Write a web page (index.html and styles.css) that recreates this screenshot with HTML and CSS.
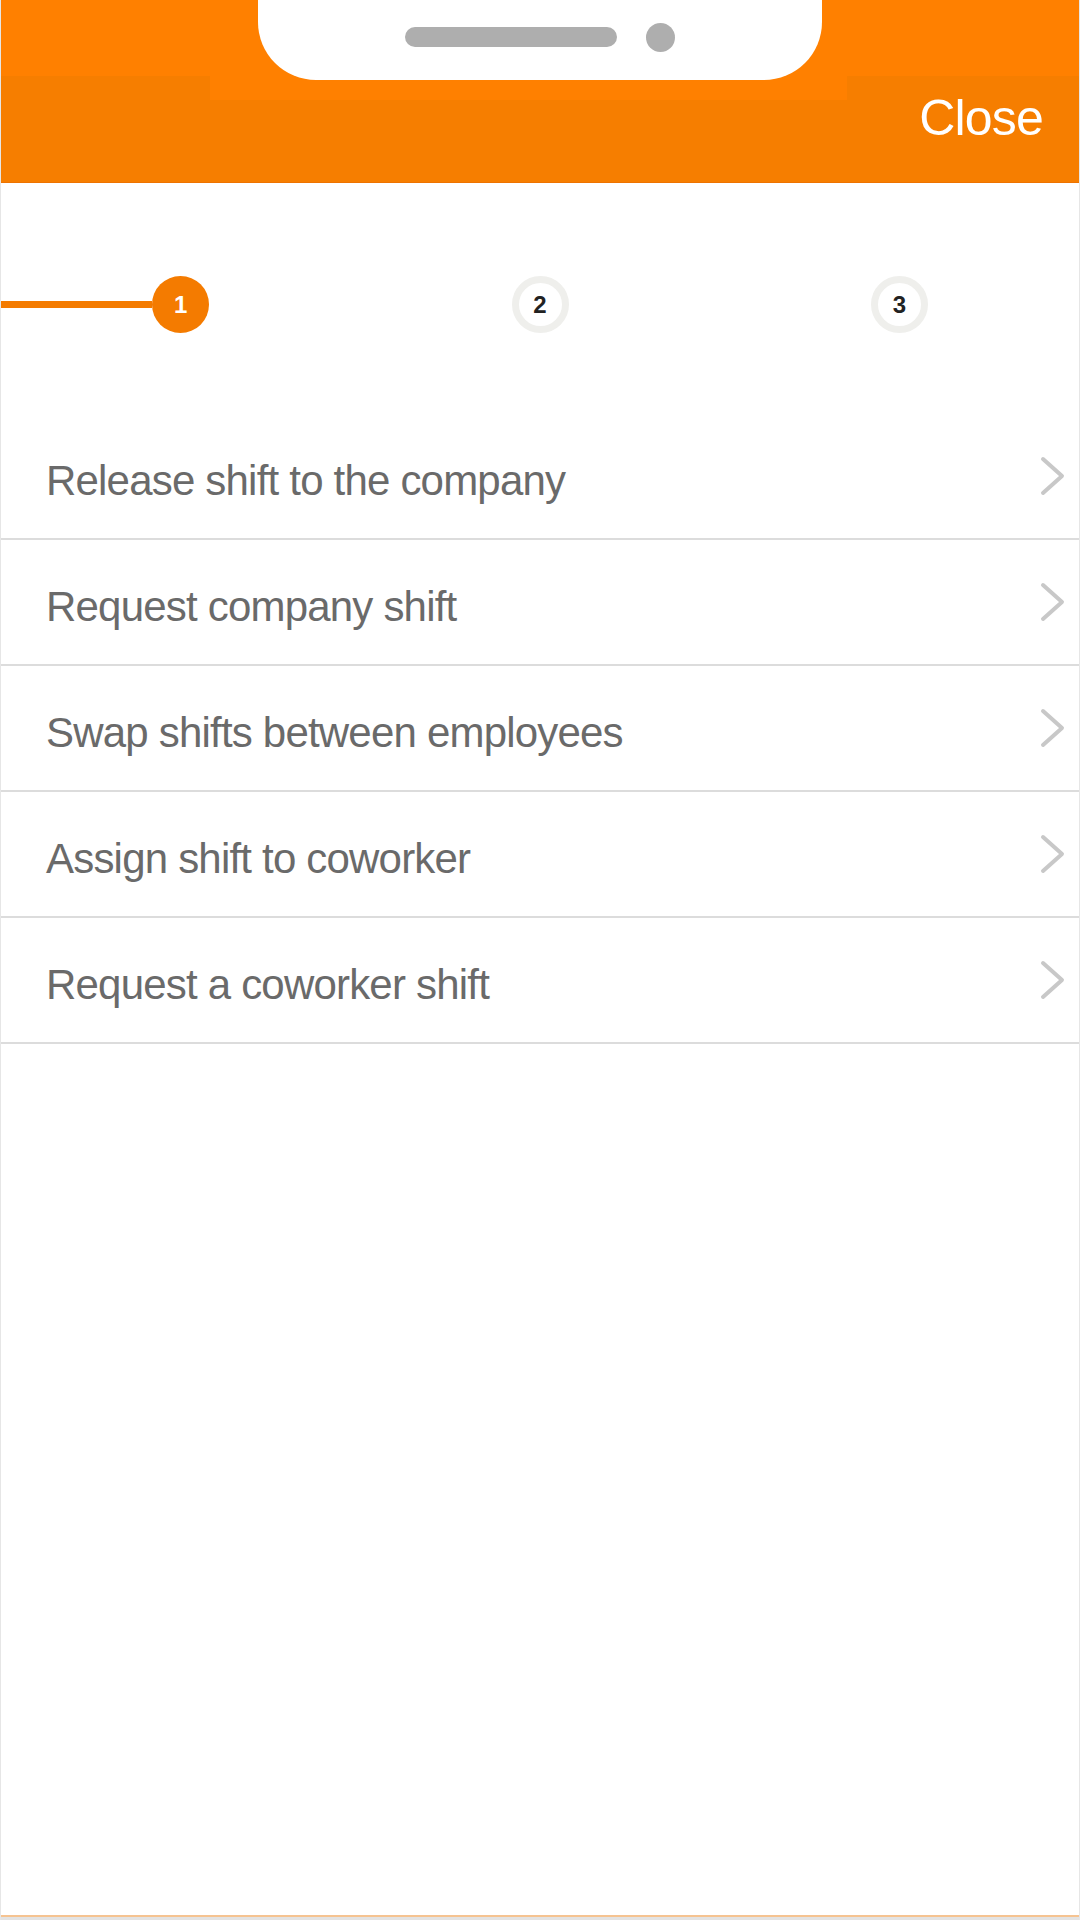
FILE: index.html
```html
<!DOCTYPE html>
<html lang="en">
<head>
<meta charset="utf-8">
<title>Shift options</title>
<link rel="stylesheet" href="styles.css">
</head>
<body>
<div class="screen">
  <header class="header">
    <div class="status">
      <div class="notch">
        <span class="speaker"></span>
        <span class="camera"></span>
      </div>
    </div>
    <div class="nav">
      <span class="close">Close</span>
    </div>
  </header>

  <div class="stepper">
    <div class="step">
      <span class="track"></span>
      <span class="dot dot-active">1</span>
      <span class="gap"></span>
    </div>
    <div class="step">
      <span class="gap"></span>
      <span class="dot">2</span>
      <span class="gap"></span>
    </div>
    <div class="step">
      <span class="gap"></span>
      <span class="dot">3</span>
      <span class="gap"></span>
    </div>
  </div>

  <ul class="menu">
    <li class="row"><span class="label">Release shift to the company</span><svg class="chev" viewBox="0 0 26 40"><polyline points="3,3 22,20 3,37"/></svg></li>
    <li class="row"><span class="label">Request company shift</span><svg class="chev" viewBox="0 0 26 40"><polyline points="3,3 22,20 3,37"/></svg></li>
    <li class="row"><span class="label">Swap shifts between employees</span><svg class="chev" viewBox="0 0 26 40"><polyline points="3,3 22,20 3,37"/></svg></li>
    <li class="row"><span class="label">Assign shift to coworker</span><svg class="chev" viewBox="0 0 26 40"><polyline points="3,3 22,20 3,37"/></svg></li>
    <li class="row"><span class="label">Request a coworker shift</span><svg class="chev" viewBox="0 0 26 40"><polyline points="3,3 22,20 3,37"/></svg></li>
  </ul>

  <div class="fill"></div>
  <div class="foot"></div>
</div>
</body>
</html>
```

FILE: styles.css
```css
html, body {
  margin: 0;
  padding: 0;
  background: #ffffff;
}

.screen {
  width: 1080px;
  height: 1920px;
  box-sizing: border-box;
  border-left: 1px solid #e6e6e6;
  border-right: 1px solid #e6e6e6;
  display: flex;
  flex-direction: column;
  font-family: "Liberation Sans", Arial, sans-serif;
  background: #ffffff;
}

/* Header */
.header {
  display: flex;
  flex-direction: column;
}

.status {
  height: 76px;
  background: #ff8000;
  display: flex;
  justify-content: center;
}

.notch {
  position: relative;
  z-index: 1;
  width: 564px;
  height: 80px;
  margin-bottom: -4px;
  background: #ffffff;
  border-radius: 0 0 58px 58px;
  display: flex;
  align-items: center;
  justify-content: center;
  gap: 29px;
  box-sizing: border-box;
}

.speaker {
  width: 212px;
  height: 20px;
  border-radius: 10px;
  background: #aeaeae;
  margin-top: -6px;
}

.camera {
  width: 29px;
  height: 29px;
  border-radius: 50%;
  background: #aeaeae;
  margin-top: -6px;
}

.nav {
  height: 107px;
  box-sizing: border-box;
  background:
    linear-gradient(#ff8000, #ff8000) 209px 0 / 637px 24px no-repeat,
    #f67e00;
  border-bottom: 1px solid #ee7300;
  display: flex;
  justify-content: flex-end;
  align-items: flex-start;
  padding-top: 17px;
  padding-right: 36px;
}

.close {
  color: #ffffff;
  font-size: 50px;
  line-height: 50px;
  letter-spacing: -0.8px;
}

/* Stepper */
.stepper {
  height: 231px;
  box-sizing: border-box;
  padding-top: 93px;
  display: grid;
  grid-template-columns: 1fr 1fr 1fr;
}

.step {
  display: flex;
  align-items: center;
  height: 57px;
}

.track {
  flex: 1;
  height: 7px;
  background: #f47b00;
}

.gap {
  flex: 1;
}

.dot {
  width: 57px;
  height: 57px;
  box-sizing: border-box;
  border-radius: 50%;
  border: 7px solid #efefec;
  background: #ffffff;
  color: #222222;
  font-weight: bold;
  font-size: 24px;
  display: flex;
  align-items: center;
  justify-content: center;
}

.dot-active {
  border: none;
  background: #f47b00;
  color: #ffffff;
}

/* Menu */
.menu {
  list-style: none;
  margin: 0;
  padding: 0;
}

.row {
  height: 126px;
  box-sizing: border-box;
  border-bottom: 2px solid #dcdcdc;
  display: flex;
  align-items: center;
  padding: 10px 13px 0 45px;
}

.label {
  font-size: 42px;
  letter-spacing: -0.8px;
  color: #6a6a6a;
}

.chev {
  margin-left: auto;
  margin-top: -10px;
  width: 26px;
  height: 40px;
  fill: none;
  stroke: #c8c8c8;
  stroke-width: 4;
  stroke-linecap: round;
  stroke-linejoin: round;
}

.fill {
  flex: 1;
}

.foot {
  height: 5px;
  box-sizing: border-box;
  border-top: 2px solid #f5c391;
  background: #e3e3e3;
}
```
